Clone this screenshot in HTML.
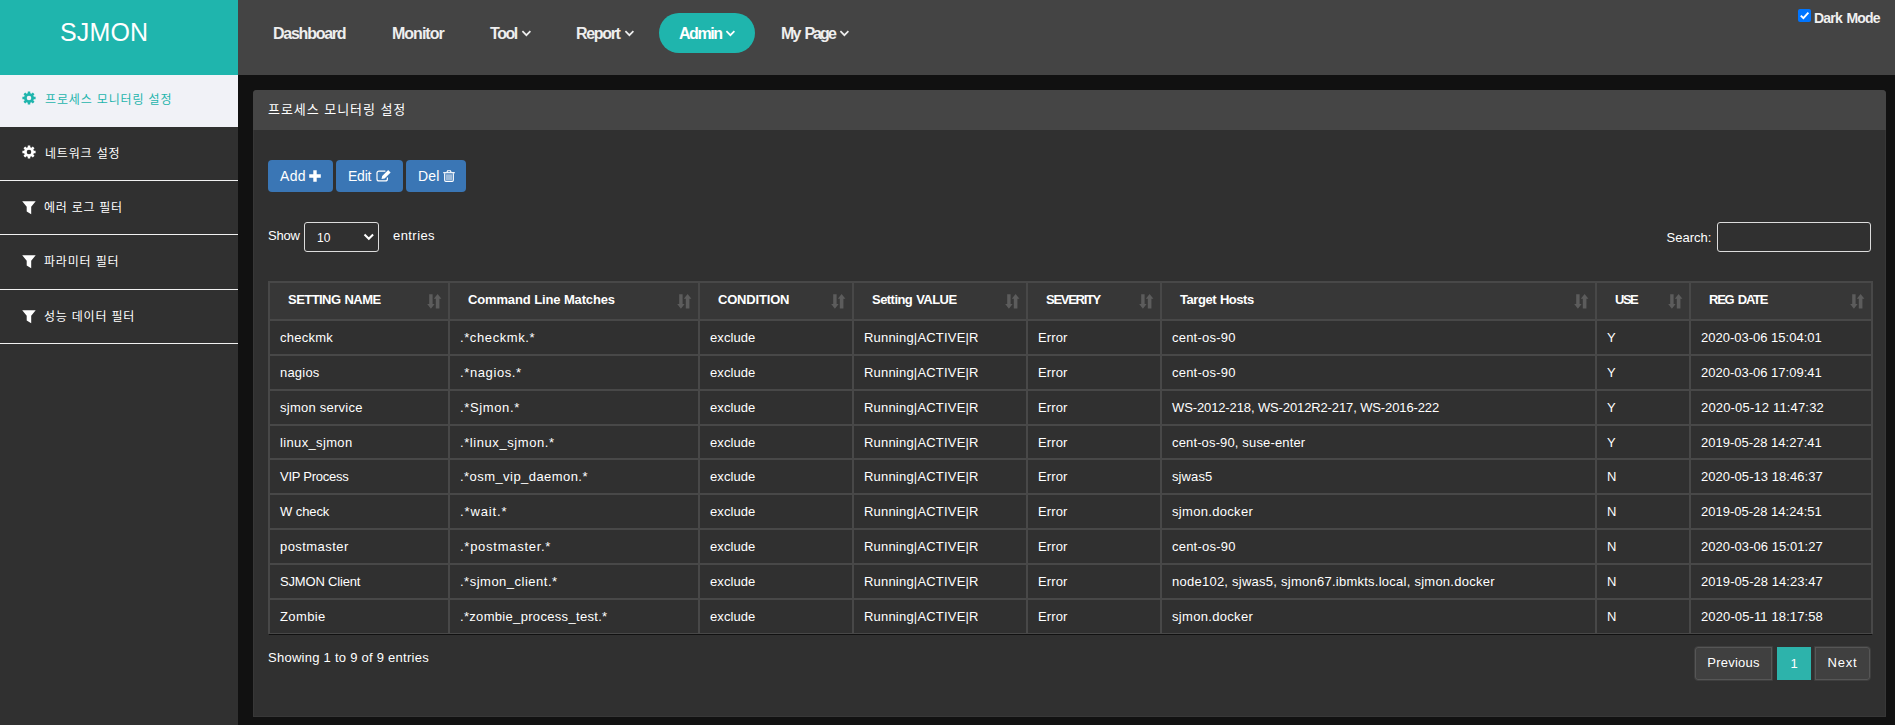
<!DOCTYPE html>
<html lang="ko">
<head>
<meta charset="utf-8">
<title>SJMON</title>
<style>
*{box-sizing:border-box;}
html,body{margin:0;padding:0;}
body{width:1895px;height:725px;overflow:hidden;background:#111111;color:#fff;
  font-family:"Liberation Sans","Noto Sans CJK KR",sans-serif;font-size:13px;position:relative;}
.abs{position:absolute;white-space:nowrap;}
#header{position:absolute;left:0;top:0;width:1895px;height:75px;background:#444444;}
#logo{position:absolute;left:0;top:0;width:238px;height:75px;background:#1fb5ad;}
#logo span{position:absolute;left:60px;top:17px;font-size:25px;line-height:30px;color:#fff;letter-spacing:0.125px;}
.nav{position:absolute;top:14px;height:40px;line-height:40px;font-size:16px;font-weight:bold;color:#eeeeee;white-space:nowrap;}
.chev{position:absolute;top:29px;}
#pill{position:absolute;left:659px;top:13px;width:96px;height:40px;border-radius:20px;background:#1fb5ad;}
#dm{position:absolute;left:1814px;top:8.6px;word-spacing:1.5px;font-size:14px;font-weight:bold;line-height:18px;letter-spacing:-0.814px;color:#f0f0f0;}
#cb{position:absolute;left:1798px;top:9px;width:13px;height:13px;border-radius:2px;background:#0075ff;}
#sidebar{position:absolute;left:0;top:75px;width:238px;height:650px;background:#303030;}
.sitem{position:absolute;left:0;width:238px;height:54px;border-bottom:1px solid #f1f1f1;}
.sitem .t{position:absolute;left:45px;top:15px;font-size:12px;line-height:22px;color:#fff;font-family:"Noto Sans CJK KR","Liberation Sans",sans-serif;white-space:nowrap;}
.sitem svg{position:absolute;}
#panel{position:absolute;left:253px;top:90px;width:1633px;height:627px;background:#303030;border-radius:4px 4px 0 0;box-shadow:inset 0 0 0 1px #373737;}
#phead{position:absolute;left:0;top:0;width:100%;height:40px;background:#454545;border-radius:4px 4px 0 0;}
#phead span{position:absolute;left:15px;top:7.6px;line-height:22px;font-size:13px;font-family:"Noto Sans CJK KR","Liberation Sans",sans-serif;color:#fff;}
.btn{position:absolute;top:70px;height:32px;border-radius:4px;background:#3a76b5;color:#fff;font-size:14px;line-height:32px;white-space:nowrap;}
.btn span{position:absolute;left:12px;top:0;}
.btn svg{position:absolute;}
.lbl{position:absolute;font-size:13px;line-height:20px;white-space:nowrap;color:#fff;}
.inp{position:absolute;height:30px;border:1px solid #dcdcdc;border-radius:3px;background:#303030;}
#tbl{position:absolute;left:15px;top:191px;width:1605px;border-collapse:separate;border-spacing:0;table-layout:fixed;
  border:1px solid #484848;border-bottom:1px solid #111111;font-size:13px;color:#fff;}
#tbl th,#tbl td{border:1px solid #484848;padding:0 0 0 10px;text-align:left;vertical-align:middle;white-space:nowrap;overflow:visible;font-weight:normal;}
#tbl th{height:38px;background:#373737;font-weight:bold;padding-left:18px;position:relative;}
#tbl td{background:#303030;}
#tbl th span{position:relative;top:-1.4px;}
#tbl .sort{position:absolute;right:6.5px;top:11px;}
.pg{position:absolute;top:556px;height:35px;font-size:13px;line-height:32px;text-align:center;color:#fff;white-space:nowrap;}
.pg span{position:relative;top:0.3px;}
.pg.o{background:#404040;border:1px solid #3e3e3e;box-shadow:inset 0 0 0 1px #565656;}
</style>
</head>
<body>
<div id="header">
  <div id="logo"><span>SJMON</span></div>
  <div id="pill"></div>
  <div class="nav" style="left:273px;letter-spacing:-1.25px">Dashboard</div>
  <div class="nav" style="left:392px;letter-spacing:-1.0px">Monitor</div>
  <div class="nav" style="left:490px;letter-spacing:-1.433px">Tool</div>
  <div class="nav" style="left:576px;letter-spacing:-1.34px">Report</div>
  <div class="nav" style="left:679px;color:#fff;letter-spacing:-1.45px">Admin</div>
  <div class="nav" style="left:781px;word-spacing:2.5px;letter-spacing:-1.932px">My Page</div>
  <svg class="chev" style="left:520.6px" width="11" height="8" viewBox="0 0 11 8"><path d="M1.4 2.2l4 4 4-4" fill="none" stroke="#eeeeee" stroke-width="1.7"/></svg>
  <svg class="chev" style="left:623.8px" width="11" height="8" viewBox="0 0 11 8"><path d="M1.4 2.2l4 4 4-4" fill="none" stroke="#eeeeee" stroke-width="1.7"/></svg>
  <svg class="chev" style="left:724.9px" width="11" height="8" viewBox="0 0 11 8"><path d="M1.4 2.2l4 4 4-4" fill="none" stroke="#ffffff" stroke-width="1.7"/></svg>
  <svg class="chev" style="left:838.9px" width="11" height="8" viewBox="0 0 11 8"><path d="M1.4 2.2l4 4 4-4" fill="none" stroke="#eeeeee" stroke-width="1.7"/></svg>
  <div id="cb"><svg width="13" height="13" viewBox="0 0 13 13" style="position:absolute;left:0;top:0"><path d="M2.8 6.6l2.6 2.6 5-5.6" fill="none" stroke="#fff" stroke-width="1.9"/></svg></div>
  <div id="dm">Dark Mode</div>
</div>
<div id="sidebar">
  <div class="sitem" style="top:0;height:52px;background:#f1f2f7;border:0">
    <svg style="left:22.2px;top:16.3px" width="14" height="14" viewBox="0 0 14 14"><path d="M5.71 2.17L5.78 0.41L8.22 0.41L8.29 2.17L9.50 2.67L10.79 1.48L12.52 3.21L11.33 4.50L11.83 5.71L13.59 5.78L13.59 8.22L11.83 8.29L11.33 9.50L12.52 10.79L10.79 12.52L9.50 11.33L8.29 11.83L8.22 13.59L5.78 13.59L5.71 11.83L4.50 11.33L3.21 12.52L1.48 10.79L2.67 9.50L2.17 8.29L0.41 8.22L0.41 5.78L2.17 5.71L2.67 4.50L1.48 3.21L3.21 1.48L4.50 2.67zM4.70 7.00a2.3 2.3 0 1 0 4.6 0a2.3 2.3 0 1 0 -4.6 0z" fill="#1fb5ad" fill-rule="evenodd"/></svg>
    <span class="t" style="top:12.7px;color:#1fb5ad;letter-spacing:0.855px">프로세스 모니터링 설정</span></div>
  <div class="sitem" style="top:52px">
    <svg style="left:22.2px;top:18.3px" width="14" height="14" viewBox="0 0 14 14"><path d="M5.71 2.17L5.78 0.41L8.22 0.41L8.29 2.17L9.50 2.67L10.79 1.48L12.52 3.21L11.33 4.50L11.83 5.71L13.59 5.78L13.59 8.22L11.83 8.29L11.33 9.50L12.52 10.79L10.79 12.52L9.50 11.33L8.29 11.83L8.22 13.59L5.78 13.59L5.71 11.83L4.50 11.33L3.21 12.52L1.48 10.79L2.67 9.50L2.17 8.29L0.41 8.22L0.41 5.78L2.17 5.71L2.67 4.50L1.48 3.21L3.21 1.48L4.50 2.67zM4.70 7.00a2.3 2.3 0 1 0 4.6 0a2.3 2.3 0 1 0 -4.6 0z" fill="#ffffff" fill-rule="evenodd"/></svg>
    <span class="t" style="top:15.4px;letter-spacing:0.83px">네트워크 설정</span></div>
  <div class="sitem" style="top:106px">
    <svg style="left:22px;top:19.5px" width="14" height="14" viewBox="0 0 14 14"><path d="M0.2 0.2h13.500l-4.500 5.500v7.500l-4.500-2.600v-4.900z" fill="#ffffff"/></svg>
    <span class="t" style="left:44px;top:14.8px;letter-spacing:0.74px">에러 로그 필터</span></div>
  <div class="sitem" style="top:160px;height:55px">
    <svg style="left:22px;top:19.5px" width="14" height="14" viewBox="0 0 14 14"><path d="M0.2 0.2h13.500l-4.500 5.500v7.500l-4.500-2.600v-4.900z" fill="#ffffff"/></svg>
    <span class="t" style="left:44px;top:14.8px;letter-spacing:0.83px">파라미터 필터</span></div>
  <div class="sitem" style="top:215px">
    <svg style="left:22px;top:19.5px" width="14" height="14" viewBox="0 0 14 14"><path d="M0.2 0.2h13.500l-4.500 5.500v7.500l-4.500-2.600v-4.900z" fill="#ffffff"/></svg>
    <span class="t" style="left:44px;top:14.8px;letter-spacing:0.78px">성능 데이터 필터</span></div>
</div>
<div id="panel">
  <div id="phead"><span style="letter-spacing:0.95px">프로세스 모니터링 설정</span></div>
  <div class="btn" style="left:15px;width:65px"><span style="letter-spacing:0.35px">Add</span>
    <svg style="left:41.2px;top:9.5px" width="12" height="12" viewBox="0 0 12 12"><path d="M4.300 0.200h3.400v4.100h4.100v3.400h-4.100v4.100h-3.400v-4.100h-4.100v-3.400h4.100z" fill="#fff"/></svg></div>
  <div class="btn" style="left:83px;width:67px"><span style="letter-spacing:-0.233px">Edit</span>
    <svg style="left:40px;top:9.5px" width="16" height="13" viewBox="0 0 16 13"><path d="M9.4 1.100H3a2 2 0 0 0-2 2v5.800a2 2 0 0 0 2 2h6.400a2 2 0 0 0 2-2V7.600" fill="none" stroke="#fff" stroke-width="1.200"/><path d="M5.500 9l.7-3 6-6 2.400 2.400-6 6z" fill="#fff"/></svg></div>
  <div class="btn" style="left:153px;width:60px"><span style="letter-spacing:0.2px">Del</span>
    <svg style="left:37.100px;top:10px" width="12" height="12" viewBox="0 0 12 12"><path d="M0.200 2.100h11.600v1.200H0.200z" fill="#fff"/><path d="M3.900 2.200l.7-1.500h2.800l.7 1.500" fill="none" stroke="#fff" stroke-width="1.100"/><path d="M1.700 3.300v7a1.100 1.100 0 0 0 1.100 1.100h6.400a1.100 1.100 0 0 0 1.100-1.100v-7" fill="none" stroke="#fff" stroke-width="1.200"/><path d="M4 4.300v5.800M6 4.300v5.800M8 4.300v5.800" stroke="#fff" stroke-width="1"/></svg></div>

  <div class="lbl" style="left:15px;top:135.5px;letter-spacing:-0.2px">Show</div>
  <div class="inp" style="left:51px;top:132px;width:75px">
    <span class="abs" style="left:12px;top:7px;font-size:12px;line-height:16px;letter-spacing:0.0px">10</span>
    <svg style="position:absolute;left:57.6px;top:10px" width="12" height="8" viewBox="0 0 12 8"><path d="M1.500 1.500l4.300 4.300 4.300-4.300" fill="none" stroke="#fff" stroke-width="2"/></svg>
  </div>
  <div class="lbl" style="left:140px;top:135.5px;letter-spacing:0.433px">entries</div>
  <div class="lbl" style="left:1413.500px;top:138px;letter-spacing:0.0px">Search:</div>
  <div class="inp" style="left:1464px;top:132px;width:154px"></div>

  <table id="tbl"><colgroup><col style="width:180px"><col style="width:250px"><col style="width:154px"><col style="width:174px"><col style="width:134px"><col style="width:435px"><col style="width:94px"><col style="width:182px"></colgroup>
  <thead><tr><th><span style="letter-spacing:-0.545px;word-spacing:0.87px">SETTING NAME</span><svg class="sort" width="15" height="15" viewBox="0 0 15 15"><path fill="#5c5c5c" d="M2.2 0.3h3.4v9.6h2l-3.7 4.8-3.7-4.8h2zM8.8 14.5h3.6v-9.8h2l-3.8-4.6-3.8 4.6h2z"/></svg></th><th><span style="letter-spacing:-0.158px;word-spacing:0.25px">Command Line Matches</span><svg class="sort" width="15" height="15" viewBox="0 0 15 15"><path fill="#5c5c5c" d="M2.2 0.3h3.4v9.6h2l-3.7 4.8-3.7-4.8h2zM8.8 14.5h3.6v-9.8h2l-3.8-4.6-3.8 4.6h2z"/></svg></th><th><span style="letter-spacing:-0.188px">CONDITION</span><svg class="sort" width="15" height="15" viewBox="0 0 15 15"><path fill="#5c5c5c" d="M2.2 0.3h3.4v9.6h2l-3.7 4.8-3.7-4.8h2zM8.8 14.5h3.6v-9.8h2l-3.8-4.6-3.8 4.6h2z"/></svg></th><th><span style="letter-spacing:-0.541px;word-spacing:0.87px">Setting VALUE</span><svg class="sort" width="15" height="15" viewBox="0 0 15 15"><path fill="#5c5c5c" d="M2.2 0.3h3.4v9.6h2l-3.7 4.8-3.7-4.8h2zM8.8 14.5h3.6v-9.8h2l-3.8-4.6-3.8 4.6h2z"/></svg></th><th><span style="letter-spacing:-1.287px">SEVERITY</span><svg class="sort" width="15" height="15" viewBox="0 0 15 15"><path fill="#5c5c5c" d="M2.2 0.3h3.4v9.6h2l-3.7 4.8-3.7-4.8h2zM8.8 14.5h3.6v-9.8h2l-3.8-4.6-3.8 4.6h2z"/></svg></th><th><span style="letter-spacing:-0.455px;word-spacing:0.73px">Target Hosts</span><svg class="sort" width="15" height="15" viewBox="0 0 15 15"><path fill="#5c5c5c" d="M2.2 0.3h3.4v9.6h2l-3.7 4.8-3.7-4.8h2zM8.8 14.5h3.6v-9.8h2l-3.8-4.6-3.8 4.6h2z"/></svg></th><th><span style="letter-spacing:-1.5px">USE</span><svg class="sort" width="15" height="15" viewBox="0 0 15 15"><path fill="#5c5c5c" d="M2.2 0.3h3.4v9.6h2l-3.7 4.8-3.7-4.8h2zM8.8 14.5h3.6v-9.8h2l-3.8-4.6-3.8 4.6h2z"/></svg></th><th><span style="letter-spacing:-1.255px;word-spacing:2.01px">REG DATE</span><svg class="sort" width="15" height="15" viewBox="0 0 15 15"><path fill="#5c5c5c" d="M2.2 0.3h3.4v9.6h2l-3.7 4.8-3.7-4.8h2zM8.8 14.5h3.6v-9.8h2l-3.8-4.6-3.8 4.6h2z"/></svg></th></tr></thead>
  <tbody>
<tr style="height:35px"><td><span style="letter-spacing:0.249px">checkmk</span></td><td><span style="letter-spacing:0.6px">.*checkmk.*</span></td><td><span style="letter-spacing:0.084px">exclude</span></td><td><span style="letter-spacing:0.199px">Running|ACTIVE|R</span></td><td><span style="letter-spacing:0.125px">Error</span></td><td><span style="letter-spacing:0.221px">cent-os-90</span></td><td><span style="letter-spacing:0.0px">Y</span></td><td><span style="letter-spacing:-0.0px">2020-03-06 15:04:01</span></td></tr>
<tr style="height:35px"><td><span style="letter-spacing:0.2px">nagios</span></td><td><span style="letter-spacing:0.611px">.*nagios.*</span></td><td><span style="letter-spacing:0.084px">exclude</span></td><td><span style="letter-spacing:0.199px">Running|ACTIVE|R</span></td><td><span style="letter-spacing:0.125px">Error</span></td><td><span style="letter-spacing:0.221px">cent-os-90</span></td><td><span style="letter-spacing:0.0px">Y</span></td><td><span style="letter-spacing:0.0px">2020-03-06 17:09:41</span></td></tr>
<tr style="height:35px"><td><span style="letter-spacing:0.251px">sjmon service</span></td><td><span style="letter-spacing:0.625px">.*Sjmon.*</span></td><td><span style="letter-spacing:0.084px">exclude</span></td><td><span style="letter-spacing:0.199px">Running|ACTIVE|R</span></td><td><span style="letter-spacing:0.125px">Error</span></td><td><span style="letter-spacing:-0.119px">WS-2012-218, WS-2012R2-217, WS-2016-222</span></td><td><span style="letter-spacing:0.0px">Y</span></td><td><span style="letter-spacing:0.167px">2020-05-12 11:47:32</span></td></tr>
<tr style="height:34px"><td><span style="letter-spacing:0.35px">linux_sjmon</span></td><td><span style="letter-spacing:0.571px">.*linux_sjmon.*</span></td><td><span style="letter-spacing:0.084px">exclude</span></td><td><span style="letter-spacing:0.199px">Running|ACTIVE|R</span></td><td><span style="letter-spacing:0.125px">Error</span></td><td><span style="letter-spacing:0.144px">cent-os-90, suse-enter</span></td><td><span style="letter-spacing:0.0px">Y</span></td><td><span style="letter-spacing:0.0px">2019-05-28 14:27:41</span></td></tr>
<tr style="height:35px"><td><span style="letter-spacing:-0.25px">VIP Process</span></td><td><span style="letter-spacing:0.441px">.*osm_vip_daemon.*</span></td><td><span style="letter-spacing:0.084px">exclude</span></td><td><span style="letter-spacing:0.199px">Running|ACTIVE|R</span></td><td><span style="letter-spacing:0.125px">Error</span></td><td><span style="letter-spacing:0.1px">sjwas5</span></td><td><span style="letter-spacing:0.0px">N</span></td><td><span style="letter-spacing:0.061px">2020-05-13 18:46:37</span></td></tr>
<tr style="height:35px"><td><span style="letter-spacing:-0.085px">W check</span></td><td><span style="letter-spacing:0.858px">.*wait.*</span></td><td><span style="letter-spacing:0.084px">exclude</span></td><td><span style="letter-spacing:0.199px">Running|ACTIVE|R</span></td><td><span style="letter-spacing:0.125px">Error</span></td><td><span style="letter-spacing:0.319px">sjmon.docker</span></td><td><span style="letter-spacing:0.0px">N</span></td><td><span style="letter-spacing:0.0px">2019-05-28 14:24:51</span></td></tr>
<tr style="height:35px"><td><span style="letter-spacing:0.443px">postmaster</span></td><td><span style="letter-spacing:0.731px">.*postmaster.*</span></td><td><span style="letter-spacing:0.084px">exclude</span></td><td><span style="letter-spacing:0.199px">Running|ACTIVE|R</span></td><td><span style="letter-spacing:0.125px">Error</span></td><td><span style="letter-spacing:0.221px">cent-os-90</span></td><td><span style="letter-spacing:0.0px">N</span></td><td><span style="letter-spacing:0.061px">2020-03-06 15:01:27</span></td></tr>
<tr style="height:35px"><td><span style="letter-spacing:-0.183px">SJMON Client</span></td><td><span style="letter-spacing:0.5px">.*sjmon_client.*</span></td><td><span style="letter-spacing:0.084px">exclude</span></td><td><span style="letter-spacing:0.199px">Running|ACTIVE|R</span></td><td><span style="letter-spacing:0.125px">Error</span></td><td><span style="letter-spacing:0.25px">node102, sjwas5, sjmon67.ibmkts.local, sjmon.docker</span></td><td><span style="letter-spacing:0.0px">N</span></td><td><span style="letter-spacing:0.061px">2019-05-28 14:23:47</span></td></tr>
<tr style="height:35px"><td><span style="letter-spacing:0.4px">Zombie</span></td><td><span style="letter-spacing:0.318px">.*zombie_process_test.*</span></td><td><span style="letter-spacing:0.084px">exclude</span></td><td><span style="letter-spacing:0.199px">Running|ACTIVE|R</span></td><td><span style="letter-spacing:0.125px">Error</span></td><td><span style="letter-spacing:0.319px">sjmon.docker</span></td><td><span style="letter-spacing:0.0px">N</span></td><td><span style="letter-spacing:0.117px">2020-05-11 18:17:58</span></td></tr>
  </tbody></table>

  <div class="lbl" style="left:15px;top:558px;letter-spacing:0.258px">Showing 1 to 9 of 9 entries</div>
  <div class="pg o" style="left:1441px;width:79px;border-radius:4px 0 0 4px"><span style="letter-spacing:0.214px">Previous</span></div>
  <div class="pg" style="left:1524px;top:557px;width:34px;height:33px;background:#2db3ab;line-height:33px">1</div>
  <div class="pg o" style="left:1561px;width:57px;border-radius:0 4px 4px 0"><span style="letter-spacing:0.767px">Next</span></div>
</div>
</body>
</html>
